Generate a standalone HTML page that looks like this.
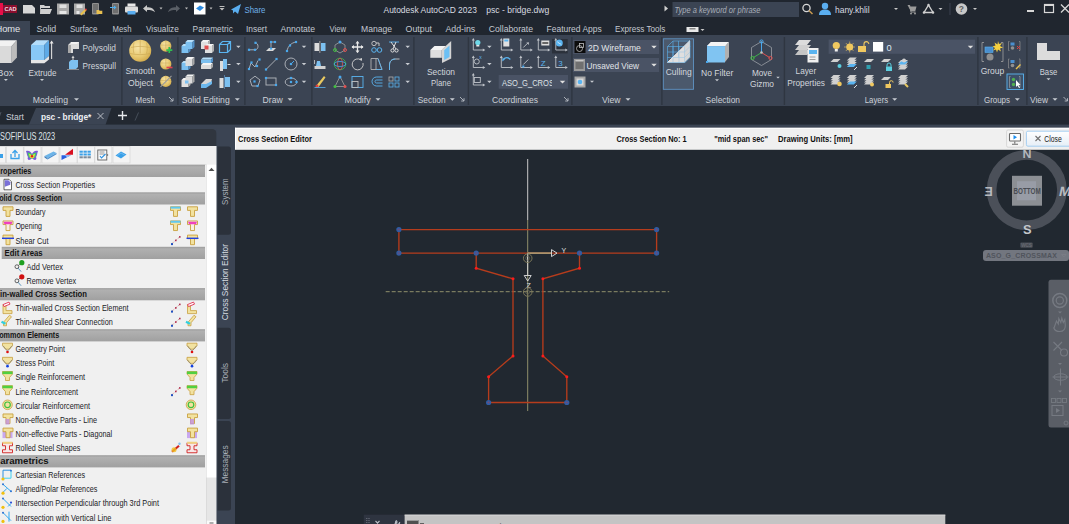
<!DOCTYPE html>
<html><head><meta charset="utf-8"><style>
*{margin:0;padding:0;box-sizing:border-box}
html,body{width:1069px;height:524px;overflow:hidden;background:#212830;font-family:"Liberation Sans",sans-serif}
.a{position:absolute}
.t{position:absolute;white-space:nowrap;line-height:1}
#title{left:0;top:0;width:1069px;height:20px;background:#20262f}
#tabs{left:0;top:20px;width:1069px;height:15px;background:#20262f}
#ribbon{left:0;top:35px;width:1069px;height:71px;background:#3b4453}
#ftabs{left:0;top:106px;width:1069px;height:19px;background:#252b35}
#strip{left:0;top:124px;width:1069px;height:5px;background:#3b4453}
#leftbg{left:0;top:129px;width:235px;height:395px;background:#3b4453}
#draw{left:235px;top:150px;width:834px;height:374px;background:#212830}
#hdr{left:235px;top:128px;width:834px;height:22px;background:#f0f0f0;border-top:1px solid #fff;border-left:1px solid #fff}
.tab{color:#c9ced6;font-size:9px;top:25px;letter-spacing:-0.2px}
</style></head><body>
<div id="title" class="a"></div><div id="tabs" class="a"></div><div id="ribbon" class="a"></div><div id="ftabs" class="a"></div><div id="strip" class="a"></div><div id="leftbg" class="a"></div><div id="draw" class="a"></div><div id="hdr" class="a"></div>
<!-- title bar -->
<svg class="a" style="left:0;top:0" width="1069" height="20" viewBox="0 0 1069 20">
<rect x="0" y="3" width="3" height="12" fill="#e8104a"/>
<rect x="3" y="5" width="14" height="8" fill="#8a0f2e"/>
<text x="4.5" y="11.3" font-family="Liberation Sans" font-weight="bold" font-size="5.6" fill="#f2dde2">CAD</text>
<path d="M23 5h9l3 3v5.5h-12z" fill="#d6d6d6"/>
<path d="M40 5h4l1 1h5v2h-9l-1 6z M41 9h11l-2 5h-10z" fill="#cfcfcf"/>
<path d="M57 3.5h12v11h-12z" fill="#a9a9a9"/><rect x="59.5" y="4.5" width="7" height="3.5" fill="#e0e0e0"/><rect x="59.5" y="11" width="7" height="3" fill="#e6e6e6"/>
<path d="M74 3.5h11v11h-11z" fill="#a9a9a9"/><rect x="76.5" y="4.5" width="6" height="3.5" fill="#e0e0e0"/><rect x="76.5" y="11" width="3" height="3" fill="#e6e6e6"/><path d="M80 14l5-5 1.5 1.5-5 5z" fill="#e8c04a"/><circle cx="85.8" cy="9.6" r="1" fill="#e04040"/>
<rect x="92" y="3" width="7" height="11.5" rx="1" fill="#8f8f8f"/><rect x="93" y="4" width="5" height="9" fill="#6f6f6f"/><path d="M96.5 10h2.5l.7.8h2.6v3.2h-5.8z" fill="#e8c050"/>
<rect x="112" y="3" width="7" height="11.5" rx="1" fill="#8f8f8f"/><rect x="113" y="4" width="5" height="9" fill="#6f6f6f"/><path d="M110 7h4v-1.5l2.5 2-2.5 2v-1.5h-4z" fill="#4fb0f0"/>
<rect x="127.5" y="3.5" width="8" height="3" fill="#e8e8e8"/><rect x="125" y="6.5" width="13" height="6" rx="1" fill="#dcdcdc"/><rect x="127.5" y="11" width="8" height="3.5" fill="#5aaef0"/>
<path d="M143 8.5l4-3.5v2.2c4 0 7 1.3 8 5-1.6-1.8-4-2.3-8-2.3v2.1z" fill="#c8c8c8"/>
<path d="M159.5 7.5h3l-1.5 2z" fill="#bdbdbd"/>
<path d="M180 8.5l-4-3.5v2.2c-4 0-7 1.3-8 5 1.6-1.8 4-2.3 8-2.3v2.1z" fill="#5a5f66"/>
<path d="M185 7.5h3l-1.5 2z" fill="#bdbdbd"/>
<rect x="194" y="2.5" width="11.5" height="12" fill="#ffffff"/><path d="M196 8.5l4-3 4 2-4 3.5z" fill="#2b8ae0"/>
<path d="M209.5 7.5h3l-1.5 2z" fill="#bdbdbd"/>
<rect x="219.5" y="6" width="5" height="1" fill="#bdbdbd"/><path d="M219.5 8h5l-2.5 2.5z" fill="#bdbdbd"/>
<path d="M231 9.5l10-5.5-3 10-3-2.5-2 2v-3z" fill="#5aaef0"/>
<text x="244.5" y="13" font-family="Liberation Sans" font-size="9.5" fill="#6fb0e8" textLength="21" lengthAdjust="spacingAndGlyphs">Share</text>
<text x="383.5" y="12.7" font-family="Liberation Sans" font-size="9.4" fill="#d8dbe0" textLength="93.4" lengthAdjust="spacingAndGlyphs">Autodesk AutoCAD 2023</text>
<text x="486.3" y="12.7" font-family="Liberation Sans" font-size="9.4" fill="#d8dbe0" textLength="63" lengthAdjust="spacingAndGlyphs">psc - bridge.dwg</text>
<path d="M664.5 5.5l3.5 3-3.5 3z" fill="#d0d0d0"/>
<rect x="672.5" y="2" width="126.5" height="15" fill="#3b4453"/>
<text x="674.5" y="12.5" font-family="Liberation Sans" font-style="italic" font-size="9" fill="#a9afb8" textLength="86" lengthAdjust="spacingAndGlyphs">Type a keyword or phrase</text>
<circle cx="806.5" cy="8" r="3.6" fill="none" stroke="#d8d8d8" stroke-width="1.3"/><path d="M809 10.5l3.5 3.5" stroke="#c99a50" stroke-width="1.5"/>
<circle cx="825" cy="6" r="3.2" fill="#5aaef0"/><path d="M819 15c0-4 2.5-5.5 6-5.5s6 1.5 6 5.5z" fill="#5aaef0"/>
<text x="835" y="12.5" font-family="Liberation Sans" font-size="9.2" fill="#d8dbe0" textLength="34.6" lengthAdjust="spacingAndGlyphs">hany.khlil</text>
<path d="M894 8h4l-2 2z" fill="#c8c8c8"/>
<path d="M907.5 5h2l.6 1.5h6.4l-1.2 4.5h-4.6z" fill="#9a9a9a"/><path d="M909.5 5l1.5 7h4.5" stroke="#9a9a9a" stroke-width="1" fill="none"/><circle cx="911" cy="13.5" r="1" fill="#9a9a9a"/><circle cx="915" cy="13.5" r="1" fill="#9a9a9a"/><path d="M928.5 5l-4.5 7.5h9z" fill="none" stroke="#d0d0d0" stroke-width="1.4"/><circle cx="928.5" cy="5" r="1.2" fill="#d0d0d0"/><circle cx="924" cy="12.5" r="1.2" fill="#d0d0d0"/><circle cx="933" cy="12.5" r="1.2" fill="#d0d0d0"/><path d="M938.5 8h4l-2 2z" fill="#c8c8c8"/>
<rect x="949.5" y="3" width="1" height="12" fill="#3a4150"/>
<circle cx="961.5" cy="9" r="5.8" fill="#c8c8c8"/><text x="958.8" y="12.3" font-family="Liberation Sans" font-weight="bold" font-size="8.5" fill="#606060">?</text>
<path d="M973 8h4l-2 2z" fill="#c8c8c8"/>
<rect x="1027" y="10" width="7" height="2" fill="#d8d8d8"/>
<rect x="1044.5" y="4.5" width="9" height="8" fill="none" stroke="#d8d8d8" stroke-width="1.2"/><rect x="1044" y="4" width="10" height="2" fill="#d8d8d8"/>
<path d="M1061 4.5l8 8M1069 4.5l-8 8" stroke="#d8d8d8" stroke-width="1.3"/>
</svg>
<svg class="a" style="left:0;top:20px" width="1069" height="15" viewBox="0 20 1069 15"><rect x="0" y="21" width="30" height="14" fill="#3b4453"/><text x="-4.6" y="31.7" font-family="Liberation Sans" font-size="9.1" fill="#e2e5ea" textLength="24.9" lengthAdjust="spacingAndGlyphs">Home</text><text x="36.6" y="31.7" font-family="Liberation Sans" font-size="9.1" fill="#c4c9d1" textLength="19.7" lengthAdjust="spacingAndGlyphs">Solid</text><text x="70" y="31.7" font-family="Liberation Sans" font-size="9.1" fill="#c4c9d1" textLength="27.5" lengthAdjust="spacingAndGlyphs">Surface</text><text x="112.6" y="31.7" font-family="Liberation Sans" font-size="9.1" fill="#c4c9d1" textLength="18.9" lengthAdjust="spacingAndGlyphs">Mesh</text><text x="146" y="31.7" font-family="Liberation Sans" font-size="9.1" fill="#c4c9d1" textLength="32.8" lengthAdjust="spacingAndGlyphs">Visualize</text><text x="192.6" y="31.7" font-family="Liberation Sans" font-size="9.1" fill="#c4c9d1" textLength="40.2" lengthAdjust="spacingAndGlyphs">Parametric</text><text x="246" y="31.7" font-family="Liberation Sans" font-size="9.1" fill="#c4c9d1" textLength="21" lengthAdjust="spacingAndGlyphs">Insert</text><text x="280.5" y="31.7" font-family="Liberation Sans" font-size="9.1" fill="#c4c9d1" textLength="34.5" lengthAdjust="spacingAndGlyphs">Annotate</text><text x="329.5" y="31.7" font-family="Liberation Sans" font-size="9.1" fill="#c4c9d1" textLength="16.5" lengthAdjust="spacingAndGlyphs">View</text><text x="361" y="31.7" font-family="Liberation Sans" font-size="9.1" fill="#c4c9d1" textLength="31" lengthAdjust="spacingAndGlyphs">Manage</text><text x="405.6" y="31.7" font-family="Liberation Sans" font-size="9.1" fill="#c4c9d1" textLength="26.4" lengthAdjust="spacingAndGlyphs">Output</text><text x="445.4" y="31.7" font-family="Liberation Sans" font-size="9.1" fill="#c4c9d1" textLength="29.9" lengthAdjust="spacingAndGlyphs">Add-ins</text><text x="488.8" y="31.7" font-family="Liberation Sans" font-size="9.1" fill="#c4c9d1" textLength="44.3" lengthAdjust="spacingAndGlyphs">Collaborate</text><text x="546.6" y="31.7" font-family="Liberation Sans" font-size="9.1" fill="#c4c9d1" textLength="55.1" lengthAdjust="spacingAndGlyphs">Featured Apps</text><text x="615.1" y="31.7" font-family="Liberation Sans" font-size="9.1" fill="#c4c9d1" textLength="50.3" lengthAdjust="spacingAndGlyphs">Express Tools</text><rect x="686.5" y="27" width="12" height="5" fill="#e8e8e8"/><rect x="689.5" y="28" width="6" height="1.5" fill="#888"/><path d="M700.5 29h4l-2 2z" fill="#c8c8c8"/></svg>
<svg class="a" style="left:0;top:0" width="1069" height="106" viewBox="0 0 1069 106"><rect x="121.2" y="37" width="1.4" height="68" fill="#2f3641"/><rect x="177.2" y="37" width="1.4" height="68" fill="#2f3641"/><rect x="244.2" y="37" width="1.4" height="68" fill="#2f3641"/><rect x="311.2" y="37" width="1.4" height="68" fill="#2f3641"/><rect x="413.2" y="37" width="1.4" height="68" fill="#2f3641"/><rect x="467.7" y="37" width="1.4" height="68" fill="#2f3641"/><rect x="571.2" y="37" width="1.4" height="68" fill="#2f3641"/><rect x="661.2" y="37" width="1.4" height="68" fill="#2f3641"/><rect x="783.7" y="37" width="1.4" height="68" fill="#2f3641"/><rect x="977.2" y="37" width="1.4" height="68" fill="#2f3641"/><rect x="1026.2" y="37" width="1.4" height="68" fill="#2f3641"/><text x="32.8" y="103" font-family="Liberation Sans" font-size="9.3" fill="#cdd1d7" text-anchor="start"  textLength="35.2" lengthAdjust="spacingAndGlyphs">Modeling</text><text x="135.5" y="103" font-family="Liberation Sans" font-size="9.3" fill="#cdd1d7" text-anchor="start"  textLength="19.5" lengthAdjust="spacingAndGlyphs">Mesh</text><text x="181.7" y="103" font-family="Liberation Sans" font-size="9.3" fill="#cdd1d7" text-anchor="start"  textLength="48.0" lengthAdjust="spacingAndGlyphs">Solid Editing</text><text x="262.5" y="103" font-family="Liberation Sans" font-size="9.3" fill="#cdd1d7" text-anchor="start"  textLength="20.2" lengthAdjust="spacingAndGlyphs">Draw</text><text x="344.6" y="103" font-family="Liberation Sans" font-size="9.3" fill="#cdd1d7" text-anchor="start"  textLength="26.1" lengthAdjust="spacingAndGlyphs">Modify</text><text x="417.8" y="103" font-family="Liberation Sans" font-size="9.3" fill="#cdd1d7" text-anchor="start"  textLength="27.8" lengthAdjust="spacingAndGlyphs">Section</text><text x="492" y="103" font-family="Liberation Sans" font-size="9.3" fill="#cdd1d7" text-anchor="start"  textLength="46" lengthAdjust="spacingAndGlyphs">Coordinates</text><text x="602" y="103" font-family="Liberation Sans" font-size="9.3" fill="#cdd1d7" text-anchor="start"  textLength="18.5" lengthAdjust="spacingAndGlyphs">View</text><text x="705.6" y="103" font-family="Liberation Sans" font-size="9.3" fill="#cdd1d7" text-anchor="start"  textLength="34.4" lengthAdjust="spacingAndGlyphs">Selection</text><text x="864.7" y="103" font-family="Liberation Sans" font-size="9.3" fill="#cdd1d7" text-anchor="start"  textLength="23.5" lengthAdjust="spacingAndGlyphs">Layers</text><text x="984" y="103" font-family="Liberation Sans" font-size="9.3" fill="#cdd1d7" text-anchor="start"  textLength="26" lengthAdjust="spacingAndGlyphs">Groups</text><text x="1030" y="103" font-family="Liberation Sans" font-size="9.3" fill="#cdd1d7" text-anchor="start"  textLength="18" lengthAdjust="spacingAndGlyphs">View</text><path d="M74.0 98.3h5l-2.5 2.5z" fill="#c8ccd2"/><path d="M234.8 98.3h5l-2.5 2.5z" fill="#c8ccd2"/><path d="M287.5 98.3h5l-2.5 2.5z" fill="#c8ccd2"/><path d="M375.5 98.3h5l-2.5 2.5z" fill="#c8ccd2"/><path d="M449.8 98.3h5l-2.5 2.5z" fill="#c8ccd2"/><path d="M625.5 98.3h5l-2.5 2.5z" fill="#c8ccd2"/><path d="M892.2 98.3h5l-2.5 2.5z" fill="#c8ccd2"/><path d="M1014.8 98.3h5l-2.5 2.5z" fill="#c8ccd2"/><path d="M1052.5 98.3h5l-2.5 2.5z" fill="#c8ccd2"/><path d="M169 97l4 4M173 98.2V101H170.2" stroke="#b8bcc4" stroke-width="0.9" fill="none"/><path d="M460 97l4 4M464 98.2V101H461.2" stroke="#b8bcc4" stroke-width="0.9" fill="none"/><path d="M564 97l4 4M568 98.2V101H565.2" stroke="#b8bcc4" stroke-width="0.9" fill="none"/><path d="M1063.5 97l4 4M1067.5 98.2V101H1064.7" stroke="#b8bcc4" stroke-width="0.9" fill="none"/><text x="-3" y="76" font-family="Liberation Sans" font-size="9.3" fill="#d2d6dc" text-anchor="start"  textLength="16.5" lengthAdjust="spacingAndGlyphs">Box</text><path d="M3.9000000000000004 79.1h4l-2.0 2.0z" fill="#c8ccd2"/><text x="28.6" y="76" font-family="Liberation Sans" font-size="9.3" fill="#d2d6dc" text-anchor="start"  textLength="27.8" lengthAdjust="spacingAndGlyphs">Extrude</text><path d="M40.0 79.1h4l-2.0 2.0z" fill="#c8ccd2"/><text x="82.5" y="51" font-family="Liberation Sans" font-size="9.3" fill="#d2d6dc" text-anchor="start"  textLength="33.5" lengthAdjust="spacingAndGlyphs">Polysolid</text><text x="82.5" y="68.5" font-family="Liberation Sans" font-size="9.3" fill="#d2d6dc" text-anchor="start"  textLength="33.5" lengthAdjust="spacingAndGlyphs">Presspull</text><text x="125.4" y="74.4" font-family="Liberation Sans" font-size="9.3" fill="#d2d6dc" text-anchor="start"  textLength="29.6" lengthAdjust="spacingAndGlyphs">Smooth</text><text x="128" y="85.5" font-family="Liberation Sans" font-size="9.3" fill="#d2d6dc" text-anchor="start"  textLength="25" lengthAdjust="spacingAndGlyphs">Object</text><text x="427" y="75.2" font-family="Liberation Sans" font-size="9.3" fill="#d2d6dc" text-anchor="start"  textLength="28" lengthAdjust="spacingAndGlyphs">Section</text><text x="431" y="86.2" font-family="Liberation Sans" font-size="9.3" fill="#d2d6dc" text-anchor="start"  textLength="20" lengthAdjust="spacingAndGlyphs">Plane</text><text x="701" y="75.5" font-family="Liberation Sans" font-size="9.3" fill="#d2d6dc" text-anchor="start"  textLength="32.3" lengthAdjust="spacingAndGlyphs">No Filter</text><path d="M715.0 79.3h4l-2.0 2.0z" fill="#c8ccd2"/><text x="751.9" y="76" font-family="Liberation Sans" font-size="9.3" fill="#d2d6dc" text-anchor="start"  textLength="20.1" lengthAdjust="spacingAndGlyphs">Move</text><text x="749.9" y="87" font-family="Liberation Sans" font-size="9.3" fill="#d2d6dc" text-anchor="start"  textLength="24.1" lengthAdjust="spacingAndGlyphs">Gizmo</text><path d="M776.25 76.8h3.5l-1.75 1.75z" fill="#c8ccd2"/><text x="795.6" y="74.4" font-family="Liberation Sans" font-size="9.3" fill="#d2d6dc" text-anchor="start"  textLength="20.6" lengthAdjust="spacingAndGlyphs">Layer</text><text x="787.2" y="86.2" font-family="Liberation Sans" font-size="9.3" fill="#d2d6dc" text-anchor="start"  textLength="37.8" lengthAdjust="spacingAndGlyphs">Properties</text><text x="980.7" y="74.4" font-family="Liberation Sans" font-size="9.3" fill="#d2d6dc" text-anchor="start"  textLength="23.6" lengthAdjust="spacingAndGlyphs">Group</text><text x="1039.7" y="75.2" font-family="Liberation Sans" font-size="9.3" fill="#d2d6dc" text-anchor="start"  textLength="17.6" lengthAdjust="spacingAndGlyphs">Base</text><path d="M1046.5 78.3h4l-2.0 2.0z" fill="#c8ccd2"/><path d="M-6 46h17.7v17h-17.7z" fill="#dadada"/><path d="M-1 40.2h17.9l-5.2 5.8h-17.7z" fill="#f2f2f2"/><path d="M11.7 46l5.2-5.8v17.2l-5.2 5.6z" fill="#bdbdbd"/><path d="M31 45h13.3v15h-13.3z" fill="#88c8f6"/><path d="M36.2 40.3h12.8l-4.7 4.7h-13.3z" fill="#b4defb"/><path d="M44.3 45l4.7-4.7v15.7l-4.7 4z" fill="#5eaae6"/><path d="M31 60h13.3l4.7-4v3.4l-4.7 3.8h-13.3z" fill="#e6e6e6"/><path d="M51.6 59v-16" stroke="#dcdcdc" stroke-width="1.1"/><path d="M49.6 43.5l2-3 2 3z" fill="#e8e8e8"/><path d="M68 45l3-3h8v7h-6v4h-5z" fill="#dcdcdc"/><path d="M71 42h8l-2 2h-6z" fill="#f2f2f2"/><path d="M68 45h3v8h-3z" fill="#a8a8a8"/><path d="M69 62l2-2h7v7l-2 2h-7z" fill="#7ec0ee"/><path d="M73 60v-3" stroke="#d8d8d8"/><path d="M71.5 58l1.5-2.5 1.5 2.5z" fill="#d8d8d8"/><path d="M67 69.5h12" stroke="#a0a0a0" stroke-width="0.8"/><defs><radialGradient id="gsph" cx="0.4" cy="0.35" r="0.7"><stop offset="0" stop-color="#f6e4a8"/><stop offset="0.6" stop-color="#e8ca72"/><stop offset="1" stop-color="#d0a848"/></radialGradient></defs><circle cx="140.2" cy="50.8" r="11" fill="url(#gsph)"/><path d="M131 47.5c6-1.5 12-1.5 18.5 0M130 53.5c6.5 1.5 13.5 1.5 20.5 0M134 42.5c-1 4-1 8 0 11M140.2 40v13.5M146.5 42.5c1 4 1 8 0 11" stroke="#c8a450" stroke-width="0.6" fill="none"/><circle cx="165.8" cy="46.1" r="5.6" fill="url(#gsph)"/><path d="M160.5 45.1h10.5M165.8 40.6v8" stroke="#c8a450" stroke-width="0.5"/><path d="M166.3 50.1h6M169.3 47.1v6" stroke="#30c050" stroke-width="1.7"/><circle cx="165.8" cy="64" r="5.6" fill="url(#gsph)"/><path d="M160.5 63h10.5M165.8 58.5v8" stroke="#c8a450" stroke-width="0.5"/><path d="M166.5 67.5h6" stroke="#e04050" stroke-width="1.6"/><circle cx="165.8" cy="81.4" r="5.6" fill="url(#gsph)"/><path d="M160.5 80.4h10.5M165.8 75.9v8" stroke="#c8a450" stroke-width="0.5"/><path d="M160.5 86.9l11-11" stroke="#9a9a9a" stroke-width="1.1"/><path d="M181.5 46h7v7h-7z" fill="#7cc0f0"/><path d="M181.5 46l2 -2h7l-2 2z" fill="#b8e0fa"/><path d="M188.5 46l2 -2v7l-2 2z" fill="#5090c8"/><path d="M185.5 42h7v7h-7z" fill="#7cc0f0"/><path d="M185.5 42l2 -2h7l-2 2z" fill="#b8e0fa"/><path d="M192.5 42l2 -2v7l-2 2z" fill="#5090c8"/><path d="M201 42h7v7h-7z" fill="#e0e0e0"/><path d="M201 42l2 -2h7l-2 2z" fill="#f4f4f4"/><path d="M208 42l2 -2v7l-2 2z" fill="#b0b0b0"/><path d="M205 46h7v7h-7z" fill="#e0e0e0"/><path d="M205 46l2 -2h7l-2 2z" fill="#f4f4f4"/><path d="M212 46l2 -2v7l-2 2z" fill="#b0b0b0"/><rect x="204.5" y="45.5" width="4" height="4" fill="#e05050"/><path d="M219.5 44.5l3-3h8v8l-3 3h-8z M219.5 44.5h8v8 M227.5 44.5l3-3" stroke="#5ab4f0" stroke-width="1.2" fill="none"/><path d="M181.5 63h7v7h-7z" fill="#7cc0f0"/><path d="M181.5 63l2 -2h7l-2 2z" fill="#b8e0fa"/><path d="M188.5 63l2 -2v7l-2 2z" fill="#5090c8"/><path d="M185.5 59h7v7h-7z" fill="#dcdcdc"/><path d="M185.5 59l2 -2h7l-2 2z" fill="#f4f4f4"/><path d="M192.5 59l2 -2v7l-2 2z" fill="#a8a8a8"/><path d="M201 59.5h10v4h-10z" fill="#7cc0f0"/><path d="M201 59.5l2 -2h10l-2 2z" fill="#b8e0fa"/><path d="M211 59.5l2 -2v4l-2 2z" fill="#5090c8"/><path d="M201 65h10v4h-10z" fill="#dcdcdc"/><path d="M201 65l2 -2h10l-2 2z" fill="#f4f4f4"/><path d="M211 65l2 -2v4l-2 2z" fill="#a8a8a8"/><path d="M220 61h3v10h-3z" fill="#dcdcdc"/><path d="M223 59h4v10h-4z" fill="#7cc0f0"/><path d="M227.5 64.5h3" stroke="#ddd" stroke-width="1"/><path d="M181.5 80h7v7h-7z" fill="#e0e0e0"/><path d="M181.5 80l2 -2h7l-2 2z" fill="#f4f4f4"/><path d="M188.5 80l2 -2v7l-2 2z" fill="#a8a8a8"/><path d="M185.5 76.5h7v7h-7z" fill="#dcdcdc"/><path d="M185.5 76.5l2 -2h7l-2 2z" fill="#f4f4f4"/><path d="M192.5 76.5l2 -2v7l-2 2z" fill="#a8a8a8"/><rect x="185" y="80.5" width="3.5" height="3" fill="#7cc0f0"/><path d="M201 84l5-5h6l-1 4-5 4h-5z" fill="#d8d8d8"/><path d="M201 84h5l6-3v3l-6 4h-5z" fill="#6cb8ee"/><path d="M219.5 78h4v10h-4z" fill="#dcdcdc"/><path d="M225 77h5v10h-5z" fill="#7cc0f0"/><path d="M224.5 75v14" stroke="#5a8ab8" stroke-width="0.8"/><path d="M236.15 45.8h4.5l-2.25 2.25z" fill="#c8ccd2"/><path d="M236.15 63.099999999999994h4.5l-2.25 2.25z" fill="#c8ccd2"/><path d="M236.15 80.8h4.5l-2.25 2.25z" fill="#c8ccd2"/><path d="M249 49.8h6c4 0 4-7 0-7" stroke="#b4b8be" fill="none" stroke-width="0.9"/><rect x="247.9" y="48.699999999999996" width="2.2" height="2.2" fill="#4aa8ec"/><rect x="253.9" y="48.699999999999996" width="2.2" height="2.2" fill="#4aa8ec"/><rect x="254.4" y="41.699999999999996" width="2.2" height="2.2" fill="#4aa8ec"/><path d="M266 51l3-3h7l-3 3z" fill="#d8d8d8"/><path d="M271 47v-5h4" stroke="#b4b8be" stroke-width="0.9" fill="none"/><rect x="269.9" y="40.9" width="2.2" height="2.2" fill="#4aa8ec"/><rect x="273.9" y="40.9" width="2.2" height="2.2" fill="#4aa8ec"/><rect x="269.9" y="47.4" width="2.2" height="2.2" fill="#4aa8ec"/><path d="M287 51c1-5 4-8 9-9" stroke="#b4b8be" fill="none" stroke-width="0.9"/><rect x="285.9" y="49.9" width="2.2" height="2.2" fill="#4aa8ec"/><rect x="288.9" y="44.4" width="2.2" height="2.2" fill="#4aa8ec"/><rect x="294.9" y="40.9" width="2.2" height="2.2" fill="#4aa8ec"/><path d="M249 69l2-6 4 4 3-6.5" stroke="#b4b8be" fill="none" stroke-width="0.9"/><rect x="247.9" y="67.9" width="2.2" height="2.2" fill="#4aa8ec"/><rect x="250.4" y="61.4" width="2.2" height="2.2" fill="#4aa8ec"/><rect x="255.9" y="64.9" width="2.2" height="2.2" fill="#4aa8ec"/><rect x="258.4" y="58.4" width="2.2" height="2.2" fill="#4aa8ec"/><path d="M266 69.5l10-10" stroke="#b4b8be" fill="none" stroke-width="0.9"/><rect x="264.9" y="68.4" width="2.2" height="2.2" fill="#4aa8ec"/><rect x="275.4" y="57.9" width="2.2" height="2.2" fill="#4aa8ec"/><circle cx="291" cy="64" r="6" stroke="#b4b8be" fill="none" stroke-width="0.9"/><path d="M291 64l3-3" stroke="#4aa8ec"/><rect x="289.9" y="62.9" width="2.2" height="2.2" fill="#4aa8ec"/><path d="M250 80l5-3.8 5 3.8-2 6h-6z" stroke="#b4b8be" fill="none" stroke-width="0.9"/><rect x="253.4" y="80.4" width="2.2" height="2.2" fill="#4aa8ec"/><rect x="256.4" y="84.9" width="2.2" height="2.2" fill="#4aa8ec"/><rect x="266" y="78" width="10" height="7" stroke="#b4b8be" fill="none" stroke-width="0.9"/><rect x="264.9" y="76.9" width="2.2" height="2.2" fill="#4aa8ec"/><rect x="274.9" y="83.9" width="2.2" height="2.2" fill="#4aa8ec"/><ellipse cx="291" cy="82" rx="5.8" ry="4" stroke="#b4b8be" fill="none" stroke-width="0.9"/><rect x="289.9" y="80.9" width="2.2" height="2.2" fill="#4aa8ec"/><rect x="289.9" y="76.9" width="2.2" height="2.2" fill="#4aa8ec"/><rect x="295.4" y="80.9" width="2.2" height="2.2" fill="#4aa8ec"/><path d="M301.75 45.8h4.5l-2.25 2.25z" fill="#c8ccd2"/><path d="M301.75 63.099999999999994h4.5l-2.25 2.25z" fill="#c8ccd2"/><path d="M301.75 80.8h4.5l-2.25 2.25z" fill="#c8ccd2"/><path d="M314.5 43h4.5v8h-4.5z" fill="#dcdcdc"/><path d="M321 43h4.5v8h-4.5z" fill="#7cc0f0"/><path d="M319.8 41v12" stroke="#909090" stroke-width="1.2"/><path d="M340 42l5 3v5l-5 3-5-3v-5z" stroke="#a0a0a0" fill="none" stroke-width="0.8"/><circle cx="340" cy="42" r="1.5" fill="#4aa8ec"/><circle cx="335" cy="50" r="1.5" fill="none" stroke="#40c040"/><circle cx="345" cy="50" r="1.5" fill="none" stroke="#e05050"/><path d="M357.5 41.5v11M352 47h11" stroke="#e8e8e8" stroke-width="1.3"/><path d="M355.5 43.5l2-2.5 2 2.5zM355.5 50.5l2 2.5 2-2.5zM354 45l-2.5 2 2.5 2zM361 45l2.5 2-2.5 2z" fill="#e8e8e8"/><circle cx="374" cy="43.5" r="2.2" stroke="#c8c8c8" fill="none" stroke-width="0.9"/><path d="M376 43h3v3" stroke="#c8c8c8" fill="none"/><circle cx="374" cy="50" r="2.3" stroke="#5ab4f0" fill="none" stroke-width="1"/><circle cx="379.5" cy="50" r="2.3" stroke="#5ab4f0" fill="none" stroke-width="1"/><path d="M389 42h10" stroke="#5ab4f0" stroke-width="0.9"/><path d="M391 42l5 7M396 42l-3 7" stroke="#e0e0e0" stroke-width="1"/><circle cx="392.5" cy="50.5" r="1.6" stroke="#e0e0e0" fill="none"/><circle cx="396.5" cy="50.5" r="1.6" stroke="#e0e0e0" fill="none"/><path d="M314.5 66h11v3h-11z" fill="#d0d0d0"/><path d="M316 66l1-5h3l1 5z" fill="#7cc0f0"/><path d="M314.5 64v-4" stroke="#c0c0c0" stroke-width="0.9"/><circle cx="340" cy="64" r="5.8" stroke="#3ab050" fill="none" stroke-width="0.9"/><ellipse cx="340" cy="64" rx="2.5" ry="5.8" stroke="#e05050" fill="none" stroke-width="0.8"/><ellipse cx="340" cy="64" rx="5.8" ry="2.5" stroke="#4aa8ec" fill="none" stroke-width="0.8"/><path d="M361 60a5.5 5.5 0 1 0 2 3" stroke="#d0d0d0" fill="none" stroke-width="0.9"/><path d="M359 59l3-1 0 3z" fill="#d0d0d0"/><path d="M371 58.5h5v11h-5zM376 58.5h2l4 11h-6" stroke="#c0c0c0" fill="none" stroke-width="0.8"/><path d="M378 58.5l4 11h-6" stroke="#5ab4f0" fill="none" stroke-width="0.8"/><path d="M389.5 70v-5c0-3.5 2-6 6-6h4" stroke="#c8c8c8" fill="none" stroke-width="0.9"/><path d="M389.5 70v-5c0-3.5 2-6 6-6" stroke="#5ab4f0" fill="none" stroke-width="0.9"/><path d="M316 86l8-10 1.5 1.5-7 9.5z" fill="#e8c860"/><circle cx="317" cy="86" r="1.5" fill="#e04040"/><path d="M314.5 87.5h11" stroke="#5ab4f0" stroke-width="0.8"/><path d="M340 76.5l-5 10h10z" stroke="#a0a0a0" fill="none" stroke-width="0.8"/><circle cx="340" cy="77" r="1.5" fill="#4aa8ec"/><circle cx="335" cy="86.5" r="1.5" fill="#40c040"/><circle cx="345" cy="86.5" r="1.5" fill="#e05050"/><rect x="352" y="76.5" width="11" height="11" stroke="#5ab4f0" fill="none" stroke-width="0.9"/><rect x="352" y="81.5" width="6" height="6" stroke="#c0c0c0" fill="none" stroke-width="0.9"/><path d="M382.5 77h-6c-2.5 0-4.5 2-4.5 4.5s2 4.5 4.5 4.5h6M382.5 80h-6c-1 0-1.5 0.7-1.5 1.5s0.5 1.5 1.5 1.5h6" stroke="#5ab4f0" fill="none" stroke-width="0.9"/><rect x="389" y="77" width="4" height="4" stroke="#b0b0b0" fill="none" stroke-width="0.8"/><rect x="395" y="77" width="4" height="4" stroke="#5ab4f0" fill="none" stroke-width="0.8"/><rect x="389" y="83" width="4" height="4" stroke="#5ab4f0" fill="none" stroke-width="0.8"/><rect x="395" y="83" width="4" height="4" stroke="#5ab4f0" fill="none" stroke-width="0.8"/><path d="M405.45 45.8h4.5l-2.25 2.25z" fill="#c8ccd2"/><path d="M405.45 63.099999999999994h4.5l-2.25 2.25z" fill="#c8ccd2"/><path d="M405.45 80.8h4.5l-2.25 2.25z" fill="#c8ccd2"/><path d="M430.3 50h11.5v7.8h-11.5z" fill="#dedede"/><path d="M434.5 46h11.5l-4.2 4h-11.5z" fill="#f4f4f4"/><path d="M442 49.2l9.2-8.3v17.7l-9.2 4.3z" fill="#d4d4d4"/><path d="M444.2 50.2l5.3-4.8v11.6l-5.3 3z" fill="#6cc0f4"/><rect x="552" y="39" width="15.7" height="14.4" fill="#2b313b"/><g transform="translate(-2.7,-2.5)"><path d="M476 52.5v-10M476 52.5h10" stroke="#c0c4ca" stroke-width="0.9"/><path d="M474.5 43.0l1.5-2.5 1.5 2.5zM485.5 51.0l2.5 1.5-2.5 1.5z" fill="#c0c4ca"/><path d="M476 70v-10M476 70h10" stroke="#c0c4ca" stroke-width="0.9"/><path d="M474.5 60.5l1.5-2.5 1.5 2.5zM485.5 68.5l2.5 1.5-2.5 1.5z" fill="#c0c4ca"/><path d="M504 52.5v-10M504 52.5h10" stroke="#c0c4ca" stroke-width="0.9"/><path d="M502.5 43.0l1.5-2.5 1.5 2.5zM513.5 51.0l2.5 1.5-2.5 1.5z" fill="#c0c4ca"/><path d="M504 70v-10M504 70h10" stroke="#c0c4ca" stroke-width="0.9"/><path d="M502.5 60.5l1.5-2.5 1.5 2.5zM513.5 68.5l2.5 1.5-2.5 1.5z" fill="#c0c4ca"/><path d="M523.5 52.5v-10M523.5 52.5h10" stroke="#c0c4ca" stroke-width="0.9"/><path d="M522.0 43.0l1.5-2.5 1.5 2.5zM533.0 51.0l2.5 1.5-2.5 1.5z" fill="#c0c4ca"/><path d="M523.5 70v-10M523.5 70h10" stroke="#c0c4ca" stroke-width="0.9"/><path d="M522.0 60.5l1.5-2.5 1.5 2.5zM533.0 68.5l2.5 1.5-2.5 1.5z" fill="#c0c4ca"/><path d="M541 52.5v-10M541 52.5h10" stroke="#c0c4ca" stroke-width="0.9"/><path d="M539.5 43.0l1.5-2.5 1.5 2.5zM550.5 51.0l2.5 1.5-2.5 1.5z" fill="#c0c4ca"/><path d="M541 70v-10M541 70h10" stroke="#c0c4ca" stroke-width="0.9"/><path d="M539.5 60.5l1.5-2.5 1.5 2.5zM550.5 68.5l2.5 1.5-2.5 1.5z" fill="#c0c4ca"/><path d="M558.5 52.5v-10M558.5 52.5h10" stroke="#c0c4ca" stroke-width="0.9"/><path d="M557.0 43.0l1.5-2.5 1.5 2.5zM568.0 51.0l2.5 1.5-2.5 1.5z" fill="#c0c4ca"/><path d="M558.5 70v-10M558.5 70h10" stroke="#c0c4ca" stroke-width="0.9"/><path d="M557.0 60.5l1.5-2.5 1.5 2.5zM568.0 68.5l2.5 1.5-2.5 1.5z" fill="#c0c4ca"/><path d="M476 87.5v-10M476 87.5h10" stroke="#c0c4ca" stroke-width="0.9"/><path d="M474.5 78.0l1.5-2.5 1.5 2.5zM485.5 86.0l2.5 1.5-2.5 1.5z" fill="#c0c4ca"/><circle cx="480.5" cy="45" r="2.6" fill="#6fd8e8"/><rect x="479" y="47.5" width="3" height="1.5" fill="#e8e8e8"/><rect x="506" y="41" width="6" height="8" fill="#e0e0e0"/><rect x="507" y="42" width="4" height="2" fill="#5ab4f0"/><path d="M526 50l5-5" stroke="#c0c4ca" stroke-width="0.9"/><path d="M529 45h2.5v2.5z" fill="#c0c4ca"/><rect x="544" y="43" width="8" height="5" fill="#e0e0e0"/><rect x="545" y="44.5" width="6" height="2" fill="#666"/><circle cx="562" cy="45.5" r="3.5" fill="#5ab4f0"/><path d="M560 44c1 2 3 2 4 3" stroke="#fff" stroke-width="0.7" fill="none"/><circle cx="479.5" cy="64" r="2.5" stroke="#c0c4ca" fill="none" stroke-width="0.9"/><text x="482" y="61.5" font-family="Liberation Sans" font-size="5" fill="#5ab4f0">x</text><path d="M506 62c2-2.5 5-2.5 7 0" stroke="#5ab4f0" stroke-width="1.3" fill="none"/><path d="M505 60.5l2.5 1.5-2.5 2z" fill="#5ab4f0"/><path d="M526 67l5-5" stroke="#c0c4ca" stroke-width="0.9"/><rect x="525" y="68" width="2" height="2" fill="#4aa8ec"/><text x="543.5" y="68" font-family="Liberation Sans" font-size="8" fill="#5ab4f0">Z</text><text x="561" y="68" font-family="Liberation Sans" font-size="8" fill="#5ab4f0">3</text><rect x="477" y="80" width="6" height="5" stroke="#c0c4ca" fill="none" stroke-width="0.9"/></g><path d="M487.15 45.8h4.5l-2.25 2.25z" fill="#c8ccd2"/><path d="M487.15 63.099999999999994h4.5l-2.25 2.25z" fill="#c8ccd2"/><path d="M487.15 80.8h4.5l-2.25 2.25z" fill="#c8ccd2"/><rect x="498.7" y="75" width="69.3" height="13.7" fill="#4a5365"/><clipPath id="cpaso"><rect x="500" y="75" width="52" height="14"/></clipPath><text x="502" y="85.5" font-family="Liberation Sans" font-size="9.3" fill="#dfe2e6" text-anchor="start" clip-path="url(#cpaso)" textLength="57" lengthAdjust="spacingAndGlyphs">ASO_G_CROSS</text><path d="M559.75 80.8h5.5l-2.75 2.75z" fill="#e0e0e0"/><rect x="573" y="40" width="86" height="14" fill="#4a5365"/><rect x="574.5" y="41" width="11" height="12" fill="#0c0c0c"/><circle cx="579.5" cy="48.5" r="3" stroke="#c0c0c0" fill="none" stroke-width="0.8"/><rect x="579.5" y="43.5" width="4" height="4" stroke="#c0c0c0" fill="none" stroke-width="0.8"/><text x="588" y="50.8" font-family="Liberation Sans" font-size="9.8" fill="#e2e5e9" text-anchor="start"  textLength="52.8" lengthAdjust="spacingAndGlyphs">2D Wireframe</text><path d="M651.25 45.8h5.5l-2.75 2.75z" fill="#e0e0e0"/><rect x="573" y="58" width="86" height="14" fill="#4a5365"/><rect x="574" y="59" width="11" height="12" fill="#9a9a9a"/><rect x="575.5" y="61" width="8" height="8" fill="#707070"/><rect x="575.5" y="60" width="8" height="1.5" fill="#c8c8c8"/><text x="586.5" y="68.8" font-family="Liberation Sans" font-size="9.8" fill="#e2e5e9" text-anchor="start"  textLength="52.5" lengthAdjust="spacingAndGlyphs">Unsaved View</text><path d="M651.25 63.8h5.5l-2.75 2.75z" fill="#e0e0e0"/><rect x="574.5" y="76.5" width="11" height="11" fill="#a8a8a8"/><rect x="576.5" y="78.5" width="7" height="7" fill="#d8d8d8"/><circle cx="580" cy="82" r="2.3" fill="#5ab4f0"/><path d="M590.0 80.8h4l-2.0 2.0z" fill="#c8ccd2"/><rect x="663.3" y="38.8" width="30.2" height="50.5" fill="#4b596c" stroke="#5f93c3" stroke-width="0.9"/><path d="M667.5 62.5h17l5.5-5.5v-16.5z" fill="#d4d4d4"/><path d="M667.5 62.5h17v-16z" fill="#e6e6e6"/><path d="M684.5 46.5l5.5-5.5" stroke="#bdbdbd" stroke-width="0.6"/><path d="M667.5 46.5l5.5-5.5h17v16.5l-5.5 5.5M667.5 46.5h17v16M684.5 46.5l5.5-5.5M673 41v16.5M678.5 41v16.5M667.5 52h17M667.5 57.5h17M673 46.5v16M679 46.5v16M684.5 52l5.5-5.5M684.5 57.5l5.5-5.5M667.5 46.5v16h17" stroke="#5ab4f0" stroke-width="0.6" fill="none"/><path d="M667.5 62.5h17l5.5-5.5v-16.5z" fill="#d8d8d8" opacity="0.55"/><path d="M667.5 62.5L690 40.5" stroke="#f4f4f4" stroke-width="0.8"/><text x="665.7" y="75.2" font-family="Liberation Sans" font-size="9.3" fill="#d2d6dc" text-anchor="start"  textLength="25.9" lengthAdjust="spacingAndGlyphs">Culling</text><path d="M707 46l4-4h17l-2 3v15h-19z" fill="#dedede"/><rect x="707" y="46.5" width="18" height="16" fill="#80c4f2"/><rect x="707" y="45" width="18" height="1.5" fill="#4aa8ec"/><path d="M725 46l4-4v15l-4 5z" fill="#b0b0b0"/><path d="M707 46l4-4h18l-4 4z" fill="#f4f4f4"/><rect x="706" y="61" width="2" height="2" fill="#4aa8ec"/><path d="M761.5 41.5l10 6v12l-10 6-10-6v-12z" stroke="#9a9ea4" fill="none" stroke-width="0.8"/><path d="M761.5 41.5v11" stroke="#4aa8ec" fill="none"/><path d="M761.5 52.5l-8 5" stroke="#40b050" fill="none"/><path d="M761.5 52.5l8 5" stroke="#e05050" fill="none"/><circle cx="761.5" cy="41.5" r="1.6" fill="none" stroke="#4aa8ec"/><circle cx="752.5" cy="58" r="1.6" fill="none" stroke="#40c040"/><circle cx="770.5" cy="58" r="1.6" fill="none" stroke="#e05050"/><circle cx="761.5" cy="52.5" r="1.3" fill="#c0c0c0"/><path d="M795 45l4-5h12l-4 5z" fill="#dcdcdc"/><path d="M795 50l4-5h12l-4 5z" fill="#d0d0d0"/><path d="M795 55l4-5h12l-4 5z" fill="#c4c4c4"/><rect x="807.5" y="48" width="11" height="14.5" fill="#f0f0f0"/><rect x="809" y="50" width="8" height="4" fill="#5ab4f0"/><path d="M809.5 57h6M809.5 59.5h6" stroke="#888" stroke-width="0.8"/><rect x="828.6" y="39.6" width="146.5" height="14.2" fill="#4a5365"/><circle cx="836.3" cy="45.5" r="3.6" fill="#f0c860"/><rect x="834.8" y="49" width="3" height="2.5" fill="#f0f0f0"/><circle cx="849.7" cy="47" r="3.5" fill="#f0c860"/><path d="M844 47h11M849.7 41.5v11M845.8 43l7.8 8M853.6 43l-7.8 8" stroke="#f0c860" stroke-width="0.6"/><rect x="858" y="46" width="8" height="6" fill="#f0c860"/><path d="M864 46v-2a2.4 2.4 0 0 1 4.8 0" stroke="#f0c860" stroke-width="1.1" fill="none"/><rect x="873" y="42" width="10.2" height="9.6" fill="#ffffff"/><text x="886.5" y="50.5" font-family="Liberation Sans" font-size="9.3" fill="#dce8f4" text-anchor="start"  letter-spacing="0">0</text><path d="M967.75 45.8h5.5l-2.75 2.75z" fill="#e0e0e0"/><path d="M830.5 62.0l3-3h7l-3 3z" fill="#d0d0d0"/><circle cx="839.5" cy="66" r="2" fill="#5ccfe0"/><path d="M846.8 60.5l3-3h7l-3 3z" fill="#d0d0d0"/><path d="M846.8 62.7l3-3h7l-3 3z" fill="#d0d0d0"/><path d="M846.8 64.9l3-3h7l-3 3z" fill="#d0d0d0"/><path d="M846.8 67.1l3-3h7l-3 3z" fill="#5ab4f0"/><path d="M854 70l3-3" stroke="#e0e0e0"/><path d="M864 62.0l3-3h7l-3 3z" fill="#d0d0d0"/><rect x="866.5" y="65" width="4" height="4" fill="#30a0b0"/><path d="M881 62.0l3-3h7l-3 3z" fill="#d0d0d0"/><rect x="886" y="66.5" width="6" height="4.5" fill="#5ccfe0"/><path d="M887 66.5v-1.5a2 2 0 0 1 4 0v1.5" stroke="#5ccfe0" fill="none"/><path d="M898 63.0l3-3h7l-3 3z" fill="#d0d0d0"/><path d="M898 65.2l3-3h7l-3 3z" fill="#d0d0d0"/><path d="M898 67.4l3-3h7l-3 3z" fill="#d0d0d0"/><path d="M898 69.6l3-3h7l-3 3z" fill="#d0d0d0"/><path d="M898 64.5l3-3h7l-3 3z" fill="#5ab4f0"/><circle cx="904" cy="60.5" r="2" fill="#d0d0d0"/><path d="M830.5 78.0l3-3h7l-3 3z" fill="#d0d0d0"/><path d="M830.5 80.2l3-3h7l-3 3z" fill="#d0d0d0"/><path d="M830.5 82.4l3-3h7l-3 3z" fill="#d0d0d0"/><path d="M830.5 84.6l3-3h7l-3 3z" fill="#d0d0d0"/><circle cx="839.5" cy="84" r="2.3" fill="#f0c860"/><path d="M846.8 78.0l3-3h7l-3 3z" fill="#d0d0d0"/><path d="M846.8 80.2l3-3h7l-3 3z" fill="#d0d0d0"/><path d="M846.8 82.4l3-3h7l-3 3z" fill="#d0d0d0"/><path d="M846.8 84.6l3-3h7l-3 3z" fill="#5ab4f0"/><path d="M854 88l3-3" stroke="#e0e0e0"/><path d="M864 78.0l3-3h7l-3 3z" fill="#d0d0d0"/><path d="M864 80.2l3-3h7l-3 3z" fill="#d0d0d0"/><path d="M864 82.4l3-3h7l-3 3z" fill="#d0d0d0"/><path d="M864 84.6l3-3h7l-3 3z" fill="#d0d0d0"/><circle cx="872" cy="84.5" r="2" fill="#f0c860"/><path d="M881 80.0l3-3h7l-3 3z" fill="#d0d0d0"/><rect x="885.5" y="84" width="5.5" height="4" fill="#f0c860"/><path d="M889.5 84v-1.5a1.8 1.8 0 0 1 3.6 0" stroke="#f0c860" fill="none"/><path d="M898 78.0l3-3h7l-3 3z" fill="#d0d0d0"/><path d="M898 80.2l3-3h7l-3 3z" fill="#d0d0d0"/><path d="M898 82.4l3-3h7l-3 3z" fill="#d0d0d0"/><path d="M898 84.6l3-3h7l-3 3z" fill="#d0d0d0"/><path d="M905 84l3 3" stroke="#e8c860" stroke-width="2"/><path d="M984 42.5h-2v19h2M1001 42.5h2v19h-2" stroke="#a0a0a0" stroke-width="0.8" fill="none"/><rect x="985" y="47" width="8" height="5.5" fill="#4a8fcf" stroke="#5ab4f0" stroke-width="0.6"/><circle cx="990" cy="57" r="3.5" fill="#909090"/><path d="M998 41l1 3 3-1-2 3 3 1.5-3 1 1 3-3-2-1 3-1-3-3 1 2-2.5-2.5-1.5 3-1-1-3 3 2z" fill="#f4d040"/><path d="M1009.5 41.5h-1v9h1M1019 41.5h1v9h-1" stroke="#909090" stroke-width="0.7" fill="none"/><rect x="1010.5" y="42.5" width="4" height="3" fill="#4a8fcf"/><circle cx="1012.5" cy="48" r="1.8" fill="#909090"/><path d="M1017 46l3 3M1020 46l-3 3" stroke="#e04040" stroke-width="1"/><path d="M1009.5 59h-1v9h1M1019 59h1v9h-1" stroke="#909090" stroke-width="0.7" fill="none"/><rect x="1010.5" y="60" width="4" height="3" fill="#4a8fcf"/><circle cx="1012.5" cy="65.5" r="1.8" fill="#909090"/><path d="M1016 69l4.5-4.5" stroke="#e8c050" stroke-width="1.5"/><rect x="1007" y="74" width="16.5" height="15.5" fill="#3c5068" stroke="#5ab4f0" stroke-width="0.9"/><path d="M1010.5 76.5h-1v11h1M1019 76.5h1v11h-1" stroke="#a0a0a0" stroke-width="0.7" fill="none"/><circle cx="1013.5" cy="79.5" r="1.7" fill="#50b050"/><circle cx="1013.5" cy="84.5" r="1.7" fill="#50b050"/><path d="M1016 80v7l1.5-1.5 1.5 2.5 1-.5-1.5-2.5h2z" fill="#fff"/><path d="M1037 43h10v8h13v9h-23z" fill="#dcdcdc"/></svg>
<svg class="a" style="left:0;top:104px" width="1069" height="25" viewBox="0 104 1069 25"><rect x="0" y="106" width="1069" height="19" fill="#222831"/><rect x="0" y="124.6" width="1069" height="5" fill="#3b4453"/><path d="M28.8 124.8L36 107.9H111.5L105.5 124.8z" fill="#3b4453"/><path d="M-1 118l2-6" stroke="#4a525e" stroke-width="1"/><text x="5.9" y="120" font-family="Liberation Sans" font-size="9.5" fill="#c9ced6" textLength="18" lengthAdjust="spacingAndGlyphs">Start</text><text x="40.9" y="120" font-family="Liberation Sans" font-weight="bold" font-size="9.5" fill="#eef0f3" textLength="50.4" lengthAdjust="spacingAndGlyphs">psc - bridge*</text><path d="M97.5 113l6 6M103.5 113l-6 6" stroke="#b8bcc4" stroke-width="1"/><path d="M122.5 111v9M118 115.5h9" stroke="#e6e8ec" stroke-width="1.4"/><path d="M135 120.5l3.5-8" stroke="#4a525e" stroke-width="0.9"/></svg>
<svg class="a" style="left:0;top:125px" width="235" height="399" viewBox="0 125 235 399"><path d="M-5 129h217a4.5 4.5 0 0 1 4.5 4.5V146H-5z" fill="#30363f"/><text x="0" y="139.8" font-family="Liberation Sans" font-size="10.4" fill="#dfe3e8" textLength="55" lengthAdjust="spacingAndGlyphs">SOFIPLUS 2023</text><defs><linearGradient id="ghdr" x1="0" y1="0" x2="0" y2="1"><stop offset="0" stop-color="#9c9c9c"/><stop offset="0.18" stop-color="#b0b0b0"/><stop offset="0.5" stop-color="#aaaaaa"/><stop offset="1" stop-color="#a0a0a0"/></linearGradient></defs><rect x="0" y="146" width="216.6" height="378" fill="#f0f0f0"/><rect x="0" y="146" width="216.6" height="18.5" fill="#f0f0f0"/><rect x="0" y="164" width="206" height="0.8" fill="#dcdcdc"/><rect x="-11.6" y="146.6" width="17" height="16.4" fill="#f4f4f4" stroke="#d6d6d6" stroke-width="0.7"/><rect x="6.300000000000001" y="146.6" width="17" height="16.4" fill="#f4f4f4" stroke="#d6d6d6" stroke-width="0.7"/><rect x="24.0" y="146.6" width="17" height="16.4" fill="#f4f4f4" stroke="#d6d6d6" stroke-width="0.7"/><rect x="42.0" y="146.6" width="17" height="16.4" fill="#f4f4f4" stroke="#d6d6d6" stroke-width="0.7"/><rect x="60.0" y="146.6" width="17" height="16.4" fill="#f4f4f4" stroke="#d6d6d6" stroke-width="0.7"/><rect x="77.4" y="146.6" width="17" height="16.4" fill="#f4f4f4" stroke="#d6d6d6" stroke-width="0.7"/><rect x="94.9" y="146.6" width="17" height="16.4" fill="#f4f4f4" stroke="#d6d6d6" stroke-width="0.7"/><rect x="113.0" y="146.6" width="17" height="16.4" fill="#f4f4f4" stroke="#d6d6d6" stroke-width="0.7"/><path d="M0 154h3v4h-3z" fill="#3aa0e8"/><path d="M11 154v4.5h8v-4.5" stroke="#3aa0e8" stroke-width="1.3" fill="none"/><path d="M15 157v-6M12.5 153l2.5-2.5 2.5 2.5" stroke="#3aa0e8" stroke-width="1.3" fill="none"/><path d="M26 151c3-1 5 1 6 3 1-2 3-4 6-3-1 3-1 5-2 6 1 1 0 3-1 3-1 0-2-1-3-2-1 1-2 2-3 2s-2-2-1-3c-1-1-1-3-2-6z" fill="#7a5ad8"/><path d="M27.5 152.5c2 0 4 1 4.5 2.5.5-1.5 2.5-2.5 4.5-2.5-.5 2-1 4-1.5 5-1 .5-2 .5-3 1.5-1-1-2-1-3-1.5-.5-1-1-3-1.5-5z" fill="#40d060"/><path d="M29 154c1.5 0 2.5 1 3 2 .5-1 1.5-2 3-2l-1 3.5c-.7.3-1.4.5-2 1-.6-.5-1.3-.7-2-1z" fill="#f0e040"/><circle cx="32" cy="156.3" r="1.2" fill="#e02020"/><path d="M44.5 156l9-4.5 3 1.5-9 5z" fill="#6cb4e8"/><path d="M44.5 156l3 2v1.5l-3-2z" fill="#3a7ab8"/><path d="M47.5 158l9-5v1.3l-9 5.2z" fill="#4a90d0"/><path d="M65 154.8l8-6v6z" fill="#d81020"/><path d="M61.5 155.2h9.5l-9.5 4.8z" fill="#2a60e0"/><path d="M65 155.2h6l-4 2z" fill="#a0c8f8"/><rect x="79.5" y="150.7" width="3.3" height="2" fill="#3aa0e8"/><rect x="83.5" y="150.7" width="3.3" height="2" fill="#3aa0e8"/><rect x="87.5" y="150.7" width="3.3" height="2" fill="#3aa0e8"/><rect x="79.5" y="153.5" width="3.3" height="2" fill="#3aa0e8"/><rect x="83.5" y="153.5" width="3.3" height="2" fill="#3aa0e8"/><rect x="87.5" y="153.5" width="3.3" height="2" fill="#3aa0e8"/><rect x="79.5" y="156.3" width="3.3" height="2" fill="#7a8a9a"/><rect x="83.5" y="156.3" width="3.3" height="2" fill="#7a8a9a"/><rect x="87.5" y="156.3" width="3.3" height="2" fill="#7a8a9a"/><rect x="97.8" y="150" width="9" height="10" fill="#f8f8f8" stroke="#606060" stroke-width="0.9"/><path d="M99.5 152h5M99.5 154h5" stroke="#707070" stroke-width="0.7"/><path d="M100 156l1.5 2 4-4" stroke="#2a90e0" stroke-width="1.1" fill="none"/><path d="M107 154l1.5 1-1.5 1z" fill="#606060"/><path d="M115.5 155.5l5.5-4 5.5 3-5.5 4z" fill="#3aa0e8"/><path d="M117.5 155.5l3.5-2.5 3.5 2" stroke="#9ad0f8" stroke-width="0.5" fill="none"/><rect x="206.1" y="164.5" width="10.3" height="360" fill="#e6e6e6"/><rect x="206.1" y="164.5" width="0.8" height="360" fill="#d8d8d8"/><rect x="206.9" y="520.7" width="9.5" height="4" fill="#fafafa"/><path d="M209.5 523h4" stroke="#606060" stroke-width="1"/><rect x="206.6" y="164.5" width="9.8" height="313" fill="#ffffff"/><path d="M208.5 171l3-3.3 3 3.3z" fill="#505050"/><rect x="0" y="164.8" width="205" height="12.2" fill="url(#ghdr)"/><text x="0.2" y="173.7" font-family="Liberation Sans" font-weight="bold" font-size="8.3" fill="#141414" textLength="31.1" lengthAdjust="spacingAndGlyphs">roperties</text><text x="15.4" y="187.7" font-family="Liberation Sans" font-size="8.2" fill="#1a1a1e" textLength="79.6" lengthAdjust="spacingAndGlyphs">Cross Section Properties</text><path d="M4.0 179.3h5l2.5 2.5v8h-7.5z" fill="#fff" stroke="#404040" stroke-width="0.8"/><path d="M4.8 180.3h3.5l2 2v2.5l-5.5 2z" fill="#7a70d8"/><rect x="0" y="192.3" width="205" height="12.2" fill="url(#ghdr)"/><text x="-0.8" y="201.2" font-family="Liberation Sans" font-weight="bold" font-size="8.3" fill="#141414" textLength="63.0" lengthAdjust="spacingAndGlyphs">olid Cross Section</text><text x="15.4" y="215.2" font-family="Liberation Sans" font-size="8.2" fill="#1a1a1e" textLength="30.0" lengthAdjust="spacingAndGlyphs">Boundary</text><path d="M3.0 206.8h10v3.6h-3v6h-4v-6h-3z" fill="#f2e2a0" stroke="#c8a040" stroke-width="0.9"/><path d="M170.5 206.8h10v3.6h-3v6h-4v-6h-3z" fill="#f2e2a0" stroke="#c8a040" stroke-width="0.9"/><rect x="170.5" y="206.60000000000002" width="10" height="2" fill="#60c8f0"/><path d="M187.5 206.8h10v3.6h-3v6h-4v-6h-3z" fill="#f2e2a0" stroke="#c8a040" stroke-width="0.9"/><text x="15.4" y="229.4" font-family="Liberation Sans" font-size="8.2" fill="#1a1a1e" textLength="26.6" lengthAdjust="spacingAndGlyphs">Opening</text><path d="M3.0 220.95000000000002h10v3.6h-3v6h-4v-6h-3z" fill="#f8f0e0" stroke="#c8a040" stroke-width="0.9"/><path d="M3.5 221.75000000000003h9l-1 2.5h-7z" fill="#f040c0"/><path d="M170.5 220.95000000000002h10v3.6h-3v6h-4v-6h-3z" fill="#f2e2a0" stroke="#c8a040" stroke-width="0.9"/><rect x="170.5" y="220.75000000000003" width="10" height="2" fill="#60c8f0"/><path d="M187.5 220.95000000000002h10v3.6h-3v6h-4v-6h-3z" fill="#f8f0e0" stroke="#c8a040" stroke-width="0.9"/><path d="M188 221.75000000000003h9l-1 2.5h-7z" fill="#f040c0"/><text x="15.4" y="243.5" font-family="Liberation Sans" font-size="8.2" fill="#1a1a1e" textLength="33.1" lengthAdjust="spacingAndGlyphs">Shear Cut</text><path d="M3.0 235.10000000000002h10v3.6h-3v6h-4v-6h-3z" fill="#f2e2a0" stroke="#c8a040" stroke-width="0.9"/><rect x="2.0" y="237.60000000000002" width="12" height="1.4" fill="#2040e0"/><path d="M172 243.60000000000002l8-7" stroke="#c04040" stroke-width="0.6" stroke-dasharray="1 1"/><rect x="171" y="243.10000000000002" width="2" height="2" fill="#2050c0"/><rect x="175" y="239.60000000000002" width="1.6" height="1.6" fill="#b03050"/><rect x="179" y="236.10000000000002" width="1.6" height="1.6" fill="#b03050"/><path d="M187.5 235.10000000000002h10v3.6h-3v6h-4v-6h-3z" fill="#f2e2a0" stroke="#c8a040" stroke-width="0.9"/><rect x="186.5" y="237.60000000000002" width="12" height="1.4" fill="#2040e0"/><rect x="1.7" y="246.8" width="203.3" height="12.2" fill="url(#ghdr)"/><text x="4.6" y="255.7" font-family="Liberation Sans" font-weight="bold" font-size="8.3" fill="#141414" textLength="38.0" lengthAdjust="spacingAndGlyphs">Edit Areas</text><text x="26.6" y="269.7" font-family="Liberation Sans" font-size="8.2" fill="#1a1a1e" textLength="36.4" lengthAdjust="spacingAndGlyphs">Add Vertex</text><circle cx="16.9" cy="266.7" r="1.9" stroke="#404040" fill="none" stroke-width="0.8"/><path d="M18.1 268.1l3 3.5" stroke="#4a8ab8" stroke-width="0.9"/><path d="M18.4 265.40000000000003l2-1.8" stroke="#404040" stroke-width="0.7"/><circle cx="21.8" cy="262.7" r="2.6" fill="#20a020"/><text x="26.6" y="283.8" font-family="Liberation Sans" font-size="8.2" fill="#1a1a1e" textLength="49.6" lengthAdjust="spacingAndGlyphs">Remove Vertex</text><circle cx="16.9" cy="280.84999999999997" r="1.9" stroke="#404040" fill="none" stroke-width="0.8"/><path d="M18.1 282.25l3 3.5" stroke="#4a8ab8" stroke-width="0.9"/><path d="M18.4 279.55l2-1.8" stroke="#404040" stroke-width="0.7"/><circle cx="21.8" cy="276.84999999999997" r="2.6" fill="#d01010"/><rect x="0" y="288.1" width="205" height="12.2" fill="url(#ghdr)"/><text x="0" y="297.0" font-family="Liberation Sans" font-weight="bold" font-size="8.3" fill="#141414" textLength="87" lengthAdjust="spacingAndGlyphs">in-walled Cross Section</text><text x="15.4" y="311.0" font-family="Liberation Sans" font-size="8.2" fill="#1a1a1e" textLength="113.2" lengthAdjust="spacingAndGlyphs">Thin-walled Cross Section Element</text><path d="M3.0 304.6h3v6h6v3h-9z" fill="#f2e2a0" stroke="#c8a040" stroke-width="0.8"/><path d="M3.0 304.6l6-2.5 1 2-6 2.5z" fill="#fff" stroke="#e03050" stroke-width="0.9"/><path d="M172 311.1l8-7" stroke="#c04040" stroke-width="0.6" stroke-dasharray="1 1"/><rect x="171" y="310.6" width="2" height="2" fill="#2050c0"/><rect x="175" y="307.1" width="1.6" height="1.6" fill="#b03050"/><rect x="179" y="303.6" width="1.6" height="1.6" fill="#b03050"/><path d="M187.5 304.6h3v6h6v3h-9z" fill="#f2e2a0" stroke="#c8a040" stroke-width="0.8"/><path d="M187.5 304.6l6-2.5 1 2-6 2.5z" fill="#fff" stroke="#e03050" stroke-width="0.9"/><text x="15.4" y="325.1" font-family="Liberation Sans" font-size="8.2" fill="#1a1a1e" textLength="97.4" lengthAdjust="spacingAndGlyphs">Thin-walled Shear Connection</text><path d="M3.5 322.25l6-7 2 1.5-5 6v3h-3z" fill="#f2e2a0" stroke="#c8a040" stroke-width="0.8"/><path d="M2.0 320.75l4 2-1 2-4-2z" fill="#30d0e0"/><path d="M172 325.25l8-7" stroke="#c04040" stroke-width="0.6" stroke-dasharray="1 1"/><rect x="171" y="324.75" width="2" height="2" fill="#2050c0"/><rect x="175" y="321.25" width="1.6" height="1.6" fill="#b03050"/><rect x="179" y="317.75" width="1.6" height="1.6" fill="#b03050"/><path d="M188 322.25l6-7 2 1.5-5 6v3h-3z" fill="#f2e2a0" stroke="#c8a040" stroke-width="0.8"/><path d="M186.5 320.75l4 2-1 2-4-2z" fill="#30d0e0"/><rect x="0" y="329.2" width="205" height="12.2" fill="url(#ghdr)"/><text x="-0.8" y="338.1" font-family="Liberation Sans" font-weight="bold" font-size="8.3" fill="#141414" textLength="60.0" lengthAdjust="spacingAndGlyphs">ommon Elements</text><text x="15.4" y="352.1" font-family="Liberation Sans" font-size="8.2" fill="#1a1a1e" textLength="49.6" lengthAdjust="spacingAndGlyphs">Geometry Point</text><path d="M2.5 343.2h10v2.5l-3 3.5h-4l-3-3.5z" fill="#f2e2a0" stroke="#c8a040" stroke-width="0.8"/><path d="M3.0 345.7l4.5 5.5 4.5-5.5" stroke="#707070" stroke-width="0.6" fill="none"/><circle cx="7.5" cy="352.0" r="1.3" fill="#e01010"/><path d="M187.0 343.2h10v2.5l-3 3.5h-4l-3-3.5z" fill="#f2e2a0" stroke="#c8a040" stroke-width="0.8"/><path d="M187.5 345.7l4.5 5.5 4.5-5.5" stroke="#707070" stroke-width="0.6" fill="none"/><circle cx="192.0" cy="352.0" r="1.3" fill="#e01010"/><text x="15.4" y="366.2" font-family="Liberation Sans" font-size="8.2" fill="#1a1a1e" textLength="38.8" lengthAdjust="spacingAndGlyphs">Stress Point</text><path d="M2.5 357.34999999999997h10v2.5l-3 3.5h-4l-3-3.5z" fill="#f2e2a0" stroke="#c8a040" stroke-width="0.8"/><path d="M3.0 359.84999999999997l4.5 5.5 4.5-5.5" stroke="#707070" stroke-width="0.6" fill="none"/><circle cx="7.5" cy="366.15" r="1.3" fill="#1040e0"/><path d="M187.0 357.34999999999997h10v2.5l-3 3.5h-4l-3-3.5z" fill="#f2e2a0" stroke="#c8a040" stroke-width="0.8"/><path d="M187.5 359.84999999999997l4.5 5.5 4.5-5.5" stroke="#707070" stroke-width="0.6" fill="none"/><circle cx="192.0" cy="366.15" r="1.3" fill="#1040e0"/><text x="15.4" y="380.4" font-family="Liberation Sans" font-size="8.2" fill="#1a1a1e" textLength="69.6" lengthAdjust="spacingAndGlyphs">Single Reinforcement</text><path d="M2.5 371.5h10v2.5l-3 3.5v3h-4v-3l-3-3.5z" fill="#f2e2a0" stroke="#c8a040" stroke-width="0.8"/><rect x="2.5" y="371.5" width="10" height="2.6" fill="#50d040"/><path d="M187 371.5h10v2.5l-3 3.5v3h-4v-3l-3-3.5z" fill="#f2e2a0" stroke="#c8a040" stroke-width="0.8"/><rect x="187" y="371.5" width="10" height="2.6" fill="#50d040"/><text x="15.4" y="394.5" font-family="Liberation Sans" font-size="8.2" fill="#1a1a1e" textLength="62.6" lengthAdjust="spacingAndGlyphs">Line Reinforcement</text><path d="M2.5 385.65h10v2.5l-3 3.5v3h-4v-3l-3-3.5z" fill="#f2e2a0" stroke="#c8a040" stroke-width="0.8"/><rect x="2.5" y="385.65" width="10" height="2.6" fill="#50d040"/><path d="M172 394.65l8-7" stroke="#c04040" stroke-width="0.6" stroke-dasharray="1 1"/><rect x="171" y="394.15" width="2" height="2" fill="#2050c0"/><rect x="175" y="390.65" width="1.6" height="1.6" fill="#b03050"/><rect x="179" y="387.15" width="1.6" height="1.6" fill="#b03050"/><path d="M187 385.65h10v2.5l-3 3.5v3h-4v-3l-3-3.5z" fill="#f2e2a0" stroke="#c8a040" stroke-width="0.8"/><rect x="187" y="385.65" width="10" height="2.6" fill="#50d040"/><text x="15.4" y="408.7" font-family="Liberation Sans" font-size="8.2" fill="#1a1a1e" textLength="74.6" lengthAdjust="spacingAndGlyphs">Circular Reinforcement</text><circle cx="7.5" cy="404.8" r="4.8" fill="#f2e2a0" stroke="#c8a040" stroke-width="0.8"/><circle cx="7.5" cy="404.8" r="2.8" fill="none" stroke="#40c040" stroke-width="1.2"/><circle cx="191" cy="404.8" r="4.8" fill="#f2e2a0" stroke="#c8a040" stroke-width="0.8"/><circle cx="191" cy="404.8" r="2.8" fill="none" stroke="#40c040" stroke-width="1.2"/><text x="15.4" y="422.8" font-family="Liberation Sans" font-size="8.2" fill="#1a1a1e" textLength="81.6" lengthAdjust="spacingAndGlyphs">Non-effective Parts - Line</text><path d="M3.0 413.95h10v3.6h-3v6h-4v-6h-3z" fill="#f2e2a0" stroke="#c8a040" stroke-width="0.9"/><rect x="5.5" y="418.95" width="4" height="5.5" fill="#c090e0" opacity="0.8"/><path d="M187.5 413.95h10v3.6h-3v6h-4v-6h-3z" fill="#f2e2a0" stroke="#c8a040" stroke-width="0.9"/><rect x="190" y="418.95" width="4" height="5.5" fill="#c090e0" opacity="0.8"/><text x="15.4" y="437.0" font-family="Liberation Sans" font-size="8.2" fill="#1a1a1e" textLength="96.8" lengthAdjust="spacingAndGlyphs">Non-effective Parts - Diagonal</text><rect x="2.5" y="431.1" width="10" height="7" fill="#c8a8f0"/><path d="M3.0 428.1h10v3.6h-3v6h-4v-6h-3z" fill="#f2e2a0" stroke="#c8a040" stroke-width="0.9"/><rect x="187" y="431.1" width="10" height="7" fill="#c8a8f0"/><path d="M187.5 428.1h10v3.6h-3v6h-4v-6h-3z" fill="#f2e2a0" stroke="#c8a040" stroke-width="0.9"/><text x="15.4" y="451.1" font-family="Liberation Sans" font-size="8.2" fill="#1a1a1e" textLength="64.9" lengthAdjust="spacingAndGlyphs">Rolled Steel Shapes</text><path d="M2.5 442.75h10v3h-3v4h3v3h-10v-3h3v-4h-3z" fill="#f8e8e8" stroke="#d02020" stroke-width="0.9"/><rect x="2.5" y="441.75" width="10" height="2" fill="#f0d080"/><path d="M172 451.75l7-6" stroke="#d02020" stroke-width="2.2"/><circle cx="174" cy="449.75" r="2.5" fill="#f0c020" opacity="0.8"/><circle cx="179.5" cy="443.75" r="1.2" fill="#80c0f0"/><path d="M187 442.75h10v3h-3v4h3v3h-10v-3h3v-4h-3z" fill="#f8e8e8" stroke="#d02020" stroke-width="0.9"/><rect x="187" y="441.75" width="10" height="2" fill="#f0d080"/><rect x="0" y="455.2" width="205" height="12.2" fill="url(#ghdr)"/><text x="0.2" y="464.1" font-family="Liberation Sans" font-weight="bold" font-size="8.3" fill="#141414" textLength="48.5" lengthAdjust="spacingAndGlyphs">arametrics</text><text x="15.4" y="478.1" font-family="Liberation Sans" font-size="8.2" fill="#1a1a1e" textLength="69.6" lengthAdjust="spacingAndGlyphs">Cartesian References</text><path d="M3.0 478.2V470.2H11.0" stroke="#2a90e0" stroke-width="1" fill="none"/><path d="M11.0 470.7V478.2H3.5" stroke="#40d0f0" stroke-width="1" fill="none"/><circle cx="3.0" cy="479.0" r="1.6" fill="#f0c010"/><circle cx="11.0" cy="470.7" r="0.9" fill="#2a70d0"/><text x="15.4" y="492.2" font-family="Liberation Sans" font-size="8.2" fill="#1a1a1e" textLength="82.0" lengthAdjust="spacingAndGlyphs">Aligned/Polar References</text><path d="M3.0 484.34999999999997l8 7M3.0 492.34999999999997l4-4" stroke="#30a8f0" stroke-width="1" fill="none"/><circle cx="3.0" cy="493.15" r="1.6" fill="#f0c010"/><circle cx="3.0" cy="484.34999999999997" r="1" fill="#2a70d0"/><circle cx="11.0" cy="491.34999999999997" r="1" fill="#2a70d0"/><text x="15.4" y="506.4" font-family="Liberation Sans" font-size="8.2" fill="#1a1a1e" textLength="143.6" lengthAdjust="spacingAndGlyphs">Intersection Perpendicular through 3rd Point</text><path d="M3.0 498.5l8 8M8.0 506.5l3 -3" stroke="#30a8f0" stroke-width="1" fill="none"/><circle cx="3.0" cy="507.3" r="1.6" fill="#f0c010"/><circle cx="3.0" cy="498.5" r="1" fill="#2a70d0"/><circle cx="11.0" cy="502.5" r="1.1" fill="#3050d8"/><text x="15.4" y="520.5" font-family="Liberation Sans" font-size="8.2" fill="#1a1a1e" textLength="96.1" lengthAdjust="spacingAndGlyphs">Intersection with Vertical Line</text><path d="M3.0 512.65l8 8M9.0 511.65v10" stroke="#30a8f0" stroke-width="1" fill="none"/><circle cx="3.0" cy="521.4499999999999" r="1.6" fill="#f0c010"/><circle cx="3.0" cy="512.65" r="1" fill="#2a70d0"/><rect x="216.6" y="129" width="18.4" height="395" fill="#3b4453"/><path d="M217.5 146.5h11a2.5 2.5 0 0 1 2.5 2.5V232.3a2.5 2.5 0 0 1-2.5 2.5h-11z" fill="#2b313b"/><text x="0" y="0" transform="translate(228.2,191.6) rotate(-90)" font-family="Liberation Sans" font-size="9" fill="#a9afb8" text-anchor="middle" textLength="26.6" lengthAdjust="spacingAndGlyphs">System</text><text x="0" y="0" transform="translate(228.2,282.2) rotate(-90)" font-family="Liberation Sans" font-size="9" fill="#d8dce2" text-anchor="middle" textLength="76.3" lengthAdjust="spacingAndGlyphs">Cross Section Editor</text><path d="M217.5 327.8h11a2.5 2.5 0 0 1 2.5 2.5V416.5a2.5 2.5 0 0 1-2.5 2.5h-11z" fill="#2b313b"/><text x="0" y="0" transform="translate(228.2,372.8) rotate(-90)" font-family="Liberation Sans" font-size="9" fill="#a9afb8" text-anchor="middle" textLength="19.8" lengthAdjust="spacingAndGlyphs">Tools</text><path d="M217.5 421h11a2.5 2.5 0 0 1 2.5 2.5V508.1a2.5 2.5 0 0 1-2.5 2.5h-11z" fill="#2b313b"/><text x="0" y="0" transform="translate(228.2,464.4) rotate(-90)" font-family="Liberation Sans" font-size="9" fill="#a9afb8" text-anchor="middle" textLength="38.2" lengthAdjust="spacingAndGlyphs">Messages</text></svg>
<svg class="a" style="left:235px;top:127px" width="834" height="397" viewBox="235 127 834 397"><rect x="235" y="127.8" width="834" height="22" fill="#f0f0f0"/><rect x="235" y="127.8" width="834" height="1" fill="#ffffff"/><rect x="235" y="127.8" width="1" height="22" fill="#ffffff"/><text x="238" y="141.8" font-family="Liberation Sans" font-weight="bold" font-size="8.4" fill="#101010" textLength="73.9" lengthAdjust="spacingAndGlyphs">Cross Section Editor</text><text x="616.5" y="142" font-family="Liberation Sans" font-weight="bold" font-size="8.4" fill="#101010" textLength="70.2" lengthAdjust="spacingAndGlyphs">Cross Section No: 1</text><text x="714.2" y="142" font-family="Liberation Sans" font-weight="bold" font-size="8.4" fill="#101010" textLength="53.8" lengthAdjust="spacingAndGlyphs">"mid span sec"</text><text x="778" y="142" font-family="Liberation Sans" font-weight="bold" font-size="8.4" fill="#101010" textLength="74.6" lengthAdjust="spacingAndGlyphs">Drawing Units: [mm]</text><rect x="1006.6" y="130" width="16.8" height="17.2" rx="1.5" fill="#f4f4f4" stroke="#cfcfcf" stroke-width="0.8"/><rect x="1009.5" y="133.5" width="11" height="7.5" rx="0.8" fill="#fff" stroke="#6a6a6a" stroke-width="1.1"/><path d="M1013.5 135v4.5l3.5-2.2z" fill="#1a8ef0"/><path d="M1014.8 141.5v2M1012 144.2h6" stroke="#6a6a6a" stroke-width="1.1"/><defs><linearGradient id="gclose" x1="0" y1="0" x2="0" y2="1"><stop offset="0" stop-color="#ffffff"/><stop offset="1" stop-color="#e6eef6"/></linearGradient></defs><rect x="1026.4" y="131.2" width="46" height="15" rx="1.5" fill="url(#gclose)" stroke="#9ccaf0" stroke-width="0.9"/><path d="M1035.5 136l5 5M1040.5 136l-5 5" stroke="#707070" stroke-width="1.1"/><text x="1044.3" y="142.3" font-family="Liberation Sans" font-size="8.8" fill="#202020" textLength="17.4" lengthAdjust="spacingAndGlyphs">Close</text><rect x="235" y="149.8" width="834" height="375" fill="#212830"/><path d="M527.7 159v61" stroke="#c8c8c8" stroke-width="1"/><path d="M527.7 220v191" stroke="#8f8f6a" stroke-width="1"/><path d="M385.7 291.7H669.2" stroke="#8f8f6a" stroke-width="1" stroke-dasharray="4 2"/><path d="M398.9 229.6 L656.6 229.6 L656.6 253.1 L579.5 253.1 L579.5 268.2 L542.9 278.8 L542.9 355.9 L566.8 376.8 L566.8 402.5 L488.6 402.5 L488.6 376.8 L513 355.9 L513 278.8 L476.2 268.2 L476.2 253.1 L398.9 253.1 z" fill="none" stroke="#b63c1c" stroke-width="1.35"/><path d="M476.2 253.1H579.5" stroke="#b63c1c" stroke-width="1.2"/><path d="M527.7 253.1H551.5" stroke="#b0a47a" stroke-width="1.5"/><path d="M551.5 249.6l5.5 3.5-5.5 3.5z" fill="none" stroke="#e0e0e0" stroke-width="0.9"/><text x="561.5" y="253" font-family="Liberation Sans" font-size="7" fill="#e0e0e0">Y</text><path d="M524.2 275.5h7l-3.5 5.5z" fill="none" stroke="#e0e0e0" stroke-width="0.9"/><path d="M527.7 253v22" stroke="#e0e0e0" stroke-width="0.9"/><text x="526.5" y="288" font-family="Liberation Sans" font-size="7" fill="#e0e0e0">Z</text><circle cx="527.7" cy="258.2" r="4.3" fill="none" stroke="#7a7658" stroke-width="1"/><circle cx="527.7" cy="258.2" r="2" fill="none" stroke="#6a6650" stroke-width="0.7"/><circle cx="527.7" cy="292" r="4.3" fill="none" stroke="#7a7658" stroke-width="1"/><circle cx="527.7" cy="292" r="2" fill="none" stroke="#6a6650" stroke-width="0.7"/><circle cx="476.2" cy="268.2" r="1.5" fill="#ff1a1a"/><circle cx="579.5" cy="268.2" r="1.5" fill="#ff1a1a"/><circle cx="513" cy="278.8" r="1.5" fill="#ff1a1a"/><circle cx="542.9" cy="278.8" r="1.5" fill="#ff1a1a"/><circle cx="513" cy="355.9" r="1.5" fill="#ff1a1a"/><circle cx="542.9" cy="355.9" r="1.5" fill="#ff1a1a"/><circle cx="488.6" cy="376.8" r="1.5" fill="#ff1a1a"/><circle cx="566.8" cy="376.8" r="1.5" fill="#ff1a1a"/><circle cx="398.9" cy="229.6" r="2.6" fill="#2a5ea8"/><path d="M397.09999999999997 229.6h3.6M398.9 227.79999999999998v3.6" stroke="#7a4a70" stroke-width="0.6"/><circle cx="656.6" cy="229.6" r="2.6" fill="#2a5ea8"/><path d="M654.8000000000001 229.6h3.6M656.6 227.79999999999998v3.6" stroke="#7a4a70" stroke-width="0.6"/><circle cx="398.9" cy="253.1" r="2.6" fill="#2a5ea8"/><path d="M397.09999999999997 253.1h3.6M398.9 251.29999999999998v3.6" stroke="#7a4a70" stroke-width="0.6"/><circle cx="656.6" cy="253.1" r="2.6" fill="#2a5ea8"/><path d="M654.8000000000001 253.1h3.6M656.6 251.29999999999998v3.6" stroke="#7a4a70" stroke-width="0.6"/><circle cx="476.2" cy="253.1" r="2.6" fill="#2a5ea8"/><path d="M474.4 253.1h3.6M476.2 251.29999999999998v3.6" stroke="#7a4a70" stroke-width="0.6"/><circle cx="579.5" cy="253.1" r="2.6" fill="#2a5ea8"/><path d="M577.7 253.1h3.6M579.5 251.29999999999998v3.6" stroke="#7a4a70" stroke-width="0.6"/><circle cx="488.6" cy="402.5" r="2.6" fill="#2a5ea8"/><path d="M486.8 402.5h3.6M488.6 400.7v3.6" stroke="#7a4a70" stroke-width="0.6"/><circle cx="566.8" cy="402.5" r="2.6" fill="#2a5ea8"/><path d="M565.0 402.5h3.6M566.8 400.7v3.6" stroke="#7a4a70" stroke-width="0.6"/><circle cx="1026.75" cy="190.1" r="35.15" fill="none" stroke="#4b5059" stroke-width="9.6"/><rect x="1012" y="175.8" width="30" height="29.9" fill="#8c8f94"/><rect x="1017" y="181.2" width="19" height="19.1" fill="#989ca6"/><text x="1013.5" y="194.3" font-family="Liberation Sans" font-weight="bold" font-size="9" fill="#484c53" textLength="27.2" lengthAdjust="spacingAndGlyphs">BOTTOM</text><text x="1022.6" y="157.7" font-family="Liberation Sans" font-weight="bold" font-size="11.4" fill="#b4b8be" textLength="9" lengthAdjust="spacingAndGlyphs">N</text><text x="1023" y="233.6" font-family="Liberation Sans" font-weight="bold" font-size="13.5" fill="#c4c7cc" textLength="8.6" lengthAdjust="spacingAndGlyphs">S</text><text x="0" y="0" transform="translate(992.7,195.7) scale(-1,1)" font-family="Liberation Sans" font-weight="bold" font-size="13.5" fill="#b8bbc0" textLength="8.2" lengthAdjust="spacingAndGlyphs">E</text><text x="0" y="0" transform="translate(1058.3,195.7) skewX(-12)" font-family="Liberation Sans" font-weight="bold" font-size="13.5" fill="#b8bbc0" textLength="12" lengthAdjust="spacingAndGlyphs">M</text><rect x="1020.3" y="242.4" width="12.4" height="5.4" rx="1" fill="#4a4e56"/><text x="1026.5" y="246.8" font-family="Liberation Sans" font-size="4.6" fill="#6e727a" text-anchor="middle">WCS</text><rect x="983" y="250.1" width="86" height="10.9" rx="3" fill="#72767f"/><text x="985.9" y="258.1" font-family="Liberation Sans" font-weight="bold" font-size="7" fill="#50545c" textLength="71" lengthAdjust="spacing">ASO_G_CROSSMAX</text><path d="M1061.5 254.5h4.5l-2.25 2.5z" fill="none" stroke="#7e828a" stroke-width="0.6"/><rect x="1048.5" y="279.8" width="25" height="147.7" rx="2.5" fill="#5a5e66"/><circle cx="1059.8" cy="300.5" r="7" fill="none" stroke="#767a82" stroke-width="1.5"/><circle cx="1059.8" cy="300.5" r="3.6" fill="none" stroke="#767a82" stroke-width="1.2"/><path d="M1058 311.5h4l-2 2z" fill="#767a82"/><path d="M1054 328l2.5-7 1.8 3 .5-5.5 2 4 1-4.5 1.5 4.5 1.5-3 .5 6c0 4-2.5 6-5.5 6-3.5 0-5.5-2-6-3.5z" fill="none" stroke="#767a82" stroke-width="1.1"/><path d="M1053.5 342l8.5 8.5M1062 342l-8.5 8.5" stroke="#767a82" stroke-width="1.1"/><circle cx="1064" cy="352.5" r="3.5" fill="none" stroke="#767a82" stroke-width="1.1"/><path d="M1058 363h4l-2 2z" fill="#767a82"/><path d="M1060.5 368.5v17M1052.5 377h16" stroke="#767a82" stroke-width="1.1"/><ellipse cx="1060.5" cy="377" rx="6.5" ry="3.3" fill="none" stroke="#767a82" stroke-width="1.1"/><path d="M1058 390.5h4l-2 2z" fill="#767a82"/><rect x="1051.5" y="398.5" width="4" height="4" fill="none" stroke="#767a82" stroke-width="0.9"/><rect x="1057" y="398.5" width="4" height="4" fill="none" stroke="#767a82" stroke-width="0.9"/><rect x="1062.5" y="398.5" width="4" height="4" fill="none" stroke="#767a82" stroke-width="0.9"/><rect x="1052" y="405.5" width="11" height="10" fill="none" stroke="#767a82" stroke-width="1"/><path d="M1056 408v5l4-2.5z" fill="#767a82"/><circle cx="1066" cy="423" r="2" fill="none" stroke="#767a82" stroke-width="0.9"/><rect x="363.8" y="514.7" width="40.8" height="10" fill="#2e3440"/><path d="M366.8 518v7M369 518v7" stroke="#7a808a" stroke-width="0.9" stroke-dasharray="1 1"/><path d="M375.5 521l4 4M379.5 521l-4 4" stroke="#b8bcc4" stroke-width="1.1"/><path d="M394 525l3.5-3.5M397 520.5a2 2 0 1 0 2.5 1.5" stroke="#b8bcc4" stroke-width="1.2" fill="none"/><rect x="404.6" y="514.7" width="540.7" height="10" fill="#c4c4c4"/><rect x="404.6" y="514.7" width="540.7" height="0.8" fill="#dadada"/><rect x="407" y="520" width="11.5" height="5" fill="#505050"/><rect x="407" y="520" width="11.5" height="1" fill="#9a9a9a"/><rect x="420" y="523" width="4" height="2" fill="#606060"/><text x="431" y="529.5" font-family="Liberation Sans" font-size="9" fill="#6a6a6a" textLength="70.5" lengthAdjust="spacing">Type a command</text></svg>
</body></html>
